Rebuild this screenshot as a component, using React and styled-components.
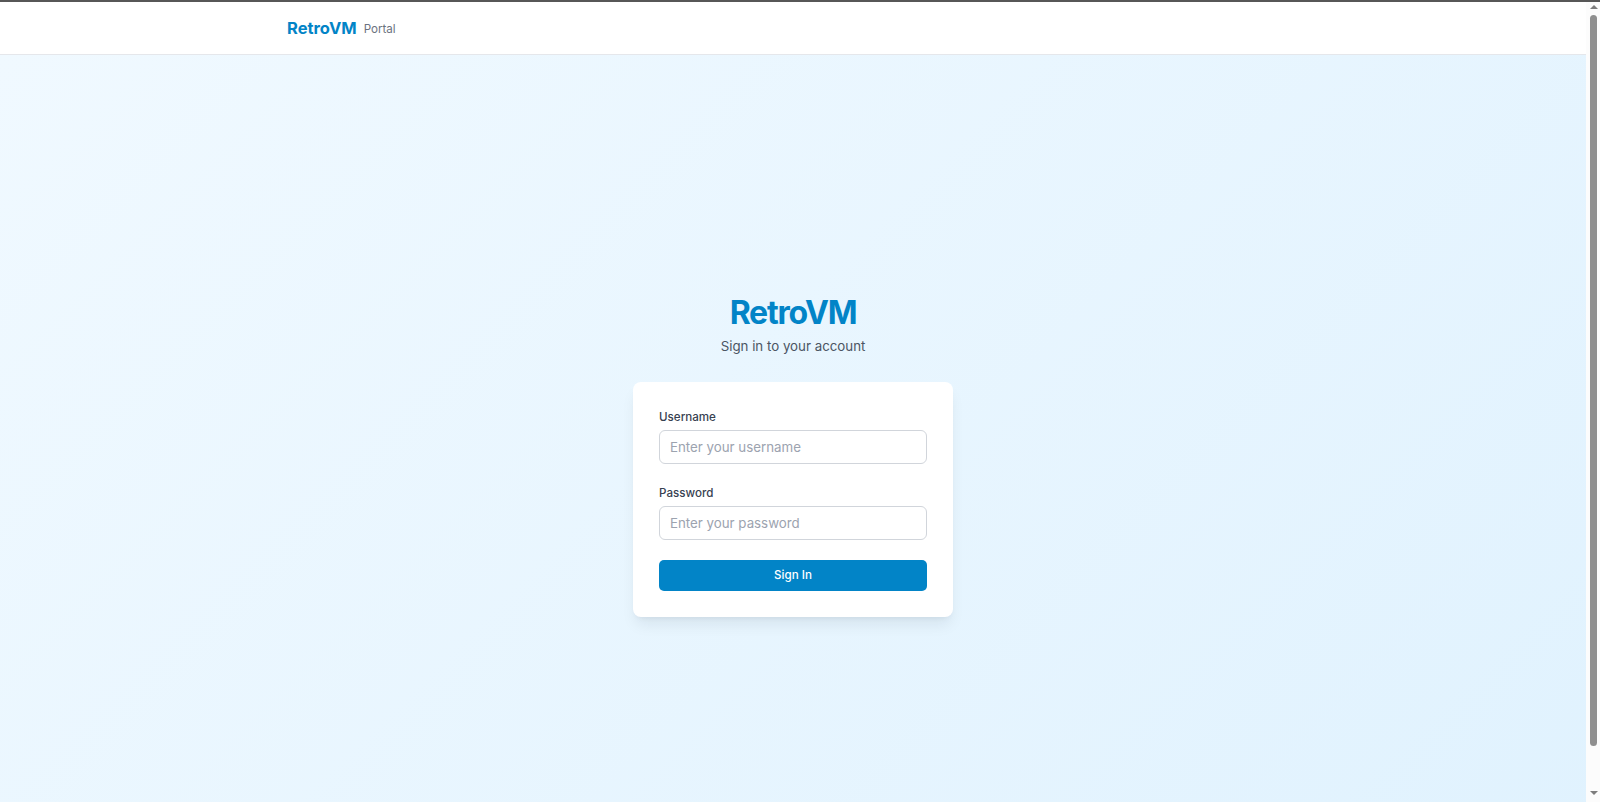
import React from 'react';
import styled, { createGlobalStyle } from 'styled-components';

const Global = createGlobalStyle`
  * { box-sizing: border-box; }
  html, body { margin: 0; padding: 0; }
  body {
    font-family: Inter, "Noto Sans", "Liberation Sans", sans-serif;
    color: #111827;
    background: #ffffff;
  }
`;

const Page = styled.div`
  margin-right: 14px;
`;

// classic browser scrollbar drawn over the right edge
const Scrollbar = styled.div`
  position: fixed;
  top: 0;
  right: 0;
  width: 14px;
  height: 100vh;
  background: #fcfcfc;
  border-top: 2px solid #575757;
  display: flex;
  flex-direction: column;
  align-items: center;
  padding-left: 1px;
`;

const Arrow = styled.span`
  width: 0;
  height: 0;
  border-left: 4px solid transparent;
  border-right: 4px solid transparent;
  ${p => p.down
    ? 'border-top: 4px solid #7d7d7d; margin-top: auto; margin-bottom: 7px;'
    : 'border-bottom: 4px solid #7d7d7d; margin-top: 3px;'}
`;

const Thumb = styled.span`
  width: 7px;
  height: 731px;
  margin-top: 6px;
  border-radius: 4px;
  background: #8f8f8f;
`;

const Header = styled.header`
  height: 55px;
  background: #ffffff;
  border-top: 2px solid #575757;
  border-bottom: 1px solid #e5e7eb;
`;

const HeaderInner = styled.div`
  max-width: 1024px;
  height: 100%;
  margin: 0 auto;
  padding: 0 6px;
  display: flex;
  align-items: center;
  gap: 7px;
`;

const Logo = styled.span`
  font-size: 16.5px;
  font-weight: 700;
  color: #0284c7;
`;

const Tag = styled.span`
  font-size: 11.6px;
  color: #6b7280;
  padding-top: 1px;
`;

const Main = styled.main`
  min-height: calc(100vh - 2px);
  display: flex;
  align-items: center;
  justify-content: center;
  background: linear-gradient(135deg, #f0f9ff 0%, #e0f2fe 100%);
`;

const Wrap = styled.div`
  width: 320px;
  display: flex;
  flex-direction: column;
  align-items: center;
`;

const Title = styled.h1`
  margin: 0;
  font-size: 32px;
  line-height: 38px;
  font-weight: 700;
  letter-spacing: -1.2px;
  color: #0284c7;
`;

const Subtitle = styled.p`
  margin: 4px 0 26px;
  font-size: 13.3px;
  line-height: 20px;
  color: #4b5563;
`;

const Card = styled.form`
  width: 100%;
  background: #ffffff;
  border-radius: 8px;
  padding: 26px;
  display: flex;
  flex-direction: column;
  gap: 20px;
  box-shadow: 0 10px 15px -3px rgba(15, 23, 42, 0.08), 0 4px 6px -4px rgba(15, 23, 42, 0.08);
`;

const Field = styled.div`
  display: flex;
  flex-direction: column;
  gap: 4px;
`;

const Label = styled.label`
  font-size: 11.6px;
  line-height: 18px;
  font-weight: 500;
  color: #374151;
`;

const Input = styled.input`
  height: 34px;
  width: 100%;
  padding: 0 10px;
  border: 1px solid #d1d5db;
  border-radius: 6px;
  font-family: inherit;
  font-size: 13.3px;
  color: #111827;
  background: #ffffff;
  outline: none;
  &::placeholder { color: #9ca3af; }
`;

const Button = styled.button`
  height: 31px;
  width: 100%;
  border: none;
  border-radius: 5px;
  background: #0284c7;
  color: #ffffff;
  font-family: inherit;
  font-size: 11.6px;
  font-weight: 500;
  cursor: pointer;
`;

export default function App() {
  return (
    <>
      <Global />
      <Page>
        <Header>
          <HeaderInner>
            <Logo>RetroVM</Logo>
            <Tag>Portal</Tag>
          </HeaderInner>
        </Header>
        <Main>
          <Wrap>
            <Title>RetroVM</Title>
            <Subtitle>Sign in to your account</Subtitle>
            <Card onSubmit={e => e.preventDefault()}>
              <Field>
                <Label htmlFor="username">Username</Label>
                <Input id="username" type="text" placeholder="Enter your username" />
              </Field>
              <Field>
                <Label htmlFor="password">Password</Label>
                <Input id="password" type="password" placeholder="Enter your password" />
              </Field>
              <Button type="submit">Sign In</Button>
            </Card>
          </Wrap>
        </Main>
      </Page>
      <Scrollbar>
        <Arrow />
        <Thumb />
        <Arrow down />
      </Scrollbar>
    </>
  );
}
